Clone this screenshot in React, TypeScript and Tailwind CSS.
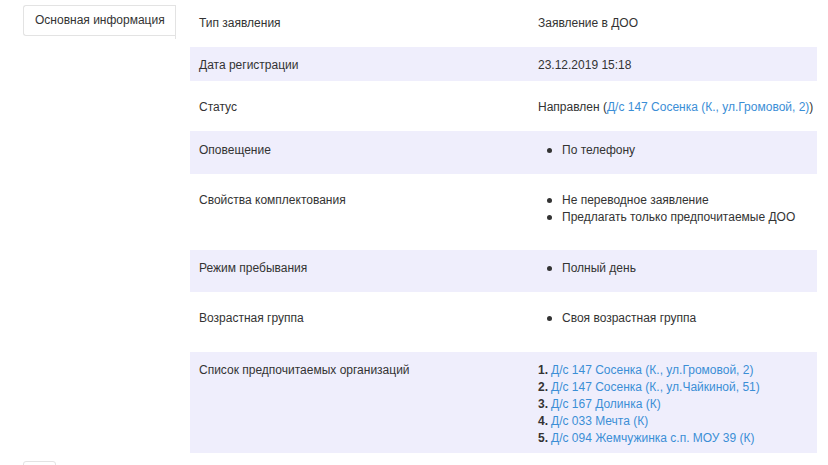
import React from "react";

const link = "text-[#3b8ed6]";

function Bullets({ items }: { items: string[] }) {
  return (
    <div className="flex flex-col">
      {items.map((t) => (
        <div key={t} className="flex items-center h-[17px]">
          <span className="ml-[9px] mr-[10px] w-[5px] h-[5px] rounded-full bg-[#333]" />
          <span>{t}</span>
        </div>
      ))}
    </div>
  );
}

type Row = { label: string; value: React.ReactNode; h: string; pt: string; shaded: boolean };

export default function App() {
  const rows: Row[] = [
    { label: "Тип заявления", value: "Заявление в ДОО", h: "h-[47px]", pt: "pt-[15px]", shaded: false },
    { label: "Дата регистрации", value: "23.12.2019 15:18", h: "h-[34px]", pt: "pt-[10px]", shaded: true },
    {
      label: "Статус",
      value: (
        <span>
          Направлен (<span className={link}>Д/с 147 Сосенка (К., ул.Громовой, 2)</span>)
        </span>
      ),
      h: "h-[50px]",
      pt: "pt-[18px]",
      shaded: false,
    },
    { label: "Оповещение", value: <Bullets items={["По телефону"]} />, h: "h-[43px]", pt: "pt-[11px]", shaded: true },
    {
      label: "Свойства комплектования",
      value: <Bullets items={["Не переводное заявление", "Предлагать только предпочитаемые ДОО"]} />,
      h: "h-[76px]",
      pt: "pt-[18px]",
      shaded: false,
    },
    { label: "Режим пребывания", value: <Bullets items={["Полный день"]} />, h: "h-[42px]", pt: "pt-[10px]", shaded: true },
    { label: "Возрастная группа", value: <Bullets items={["Своя возрастная группа"]} />, h: "h-[60px]", pt: "pt-[18px]", shaded: false },
    {
      label: "Список предпочитаемых организаций",
      value: (
        <div className="flex flex-col">
          {[
            "Д/с 147 Сосенка (К., ул.Громовой, 2)",
            "Д/с 147 Сосенка (К., ул.Чайкиной, 51)",
            "Д/с 167 Долинка (К)",
            "Д/с 033 Мечта (К)",
            "Д/с 094 Жемчужинка с.п. МОУ 39 (К)",
          ].map((t, i) => (
            <div key={t} className="h-[17px] flex items-center">
              <span className="font-bold mr-[3px]">{i + 1}.</span>
              <span className={link}>{t}</span>
            </div>
          ))}
        </div>
      ),
      h: "h-[101px]",
      pt: "pt-[10px]",
      shaded: true,
    },
  ];

  return (
    <div className="w-[828px] h-[465px] overflow-hidden bg-white text-[12px] leading-[17px] text-[#333] font-['Liberation_Sans',Arial,sans-serif]">
      <div className="flex">
        <div className="w-[190px] shrink-0 pt-[5px] pl-[23px]">
          <div className="w-[152px] h-[31px] flex items-center pl-[11px] border border-r-0 border-[#e3e3e3] rounded-l-[3px] relative">
            Основная информация
            <div className="absolute right-[-1px] top-[-1px] h-[34px] w-px bg-[#e3e3e3]" />
          </div>
        </div>
        <div className="w-[627px] flex flex-col">
          {rows.map((r) => (
            <div key={r.label} className={`flex ${r.h} ${r.shaded ? "bg-[#efeefc]" : ""}`}>
              <div className={`w-[339px] pl-[9px] ${r.pt}`}>{r.label}</div>
              <div className={`flex-1 pl-[9px] ${r.pt}`}>{r.value}</div>
            </div>
          ))}
        </div>
      </div>
      <div className="pl-[23px] pt-[8px]">
        <div className="w-[33px] h-[20px] border border-[#e3e3e3] rounded-[3px]" />
      </div>
    </div>
  );
}
